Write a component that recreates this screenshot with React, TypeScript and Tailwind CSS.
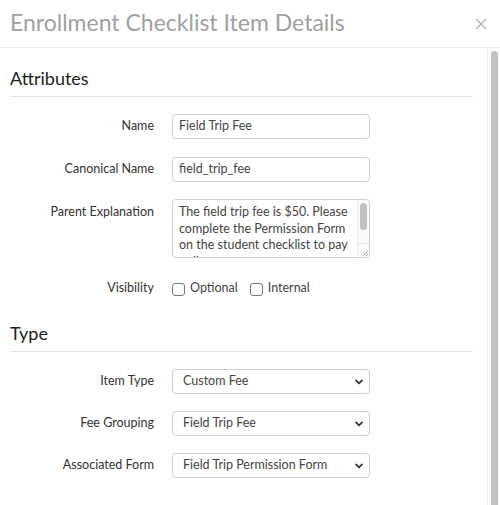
import { ReactNode } from 'react';

/* ── Small drawings ───────────────────────────────────────────────────────── */
function CloseIcon() {
  return (
    <svg width="12" height="12" viewBox="0 0 12 12" aria-label="Close">
      <path d="M1.5 1.5L10.5 10.5M10.5 1.5L1.5 10.5" stroke="#b3b3b3" strokeWidth="1.4" strokeLinecap="round" />
    </svg>
  );
}

function Chevron() {
  return (
    <svg width="8" height="6" viewBox="0 0 8 6">
      <path d="M1 1.3L4 4.3L7 1.3" fill="none" stroke="#333" strokeWidth="1.7" strokeLinecap="round" strokeLinejoin="round" />
    </svg>
  );
}

function Grip() {
  return (
    <svg width="8" height="8" viewBox="0 0 8 8">
      <path d="M7 2L2 7M7 5L5 7" stroke="#9a9a9a" strokeWidth="0.9" />
    </svg>
  );
}

/* ── Building blocks ──────────────────────────────────────────────────────── */
function Heading({ children }: { children: ReactNode }) {
  return (
    <div className="text-[18px] leading-[22px] text-[#222] pb-[7px] border-b border-[#e6e6e6]">
      {children}
    </div>
  );
}

function Row({ label, children, top = false }: { label: string; children: ReactNode; top?: boolean }) {
  return (
    <div className={`flex gap-[18px] ${top ? 'items-start' : 'items-center'}`}>
      <div className={`w-[144px] text-right text-[12.5px] text-[#333] ${top ? 'pt-[4px]' : ''}`}>{label}</div>
      {children}
    </div>
  );
}

function TextInput({ value }: { value: string }) {
  return (
    <div className="w-[198px] h-[25px] flex items-center px-[6px] border border-[#cfcfcf] rounded-[4px] text-[12.5px] text-[#444]">
      {value}
    </div>
  );
}

function Select({ value }: { value: string }) {
  return (
    <div className="w-[198px] h-[25px] flex items-center justify-between pl-[10px] pr-[6px] border border-[#cfcfcf] rounded-[4px] text-[12.5px] text-[#444]">
      <span>{value}</span>
      <Chevron />
    </div>
  );
}

function Checkbox({ label }: { label: string }) {
  return (
    <label className="flex items-center gap-[5px] text-[12.5px] text-[#444]">
      <span className="w-[13px] h-[13px] mt-[2px] border border-[#777] rounded-[3px] bg-white" />
      {label}
    </label>
  );
}

/* ── Main component ───────────────────────────────────────────────────────── */
export default function App() {
  return (
    <div className="w-[500px] h-[505px] overflow-hidden bg-white flex flex-col" style={{ fontFamily: 'Lato, "Open Sans", sans-serif' }}>

      {/* Header */}
      <div className="h-[48px] shrink-0 flex items-center justify-between pl-[10px] pr-[13px] border-b border-[#ececec]">
        <h1 className="text-[23px] text-[#a0a0a0] leading-none pb-[2px]">Enrollment Checklist Item Details</h1>
        <CloseIcon />
      </div>

      {/* Body */}
      <div className="flex flex-1 min-h-0">
        <div className="flex-1 pl-[10px] pr-[14px]">

          {/* Attributes */}
          <div className="mt-[19px]">
            <Heading>Attributes</Heading>
          </div>
          <div className="flex flex-col mt-[17px]">
            <Row label="Name"><TextInput value="Field Trip Fee" /></Row>
            <div className="mt-[18px]"><Row label="Canonical Name"><TextInput value="field_trip_fee" /></Row></div>
            <div className="mt-[17px]">
              <Row label="Parent Explanation" top>
                <div className="w-[198px] h-[59px] border border-[#cfcfcf] rounded-[4px] flex overflow-hidden">
                  <div className="flex-1 pl-[6px] pt-[4px] text-[12.5px] leading-[16.5px] text-[#444] overflow-hidden">
                    The field trip fee is $50. Please complete the Permission Form on the student checklist to pay online.
                  </div>
                  <div className="w-[12px] flex flex-col border-l border-[#ececec] bg-[#fafafa]">
                    <div className="h-[27px] mx-[2px] mt-[3px] rounded-full bg-[#c1c1c1]" />
                    <div className="flex-1" />
                    <div className="h-[14px] border-t border-[#e2e2e2] flex items-end justify-end">
                      <Grip />
                    </div>
                  </div>
                </div>
              </Row>
            </div>
            <div className="mt-[20px] h-[20px]">
              <Row label="Visibility">
                <div className="flex items-center gap-[12px] h-[20px]">
                  <Checkbox label="Optional" />
                  <Checkbox label="Internal" />
                </div>
              </Row>
            </div>
          </div>

          {/* Type */}
          <div className="mt-[24px]">
            <Heading>Type</Heading>
          </div>
          <div className="flex flex-col gap-[17px] mt-[17px]">
            <Row label="Item Type"><Select value="Custom Fee" /></Row>
            <Row label="Fee Grouping"><Select value="Field Trip Fee" /></Row>
            <Row label="Associated Form"><Select value="Field Trip Permission Form" /></Row>
          </div>
        </div>

        {/* Scrollbar */}
        <div className="w-[13px] shrink-0 flex border-l border-[#ececec] bg-[#fafafa]">
          <div className="w-[7px] ml-[3px] mt-[3px] rounded-t-full bg-[#c2c2c2]" />
        </div>
      </div>
    </div>
  );
}
